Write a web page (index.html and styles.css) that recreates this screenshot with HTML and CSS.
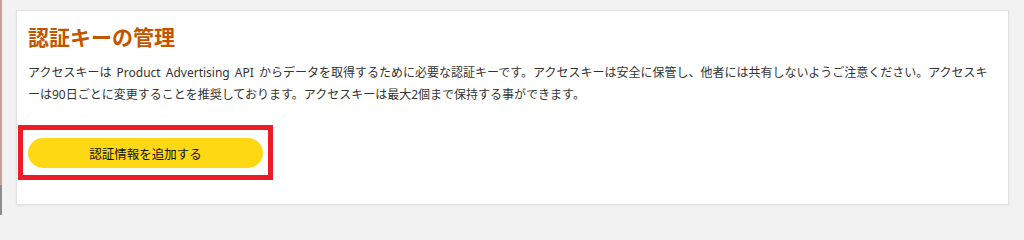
FILE: index.html
```html
<!DOCTYPE html>
<html lang="ja">
<head>
<meta charset="utf-8">
<title>認証キーの管理</title>
<link rel="stylesheet" href="styles.css">
</head>
<body>
<div class="edge"></div>
<main class="main">
  <section class="card">
    <h1 class="title">認証キーの管理</h1>
    <p class="desc">アクセスキーは Product Advertising API からデータを取得するために必要な認証キーです。アクセスキーは安全に保管し、他者には共有しないようご注意ください。アクセスキーは90日ごとに変更することを推奨しております。アクセスキーは最大2個まで保持する事ができます。</p>
    <div class="highlight">
      <button class="add-btn" type="button">認証情報を追加する</button>
    </div>
  </section>
</main>
</body>
</html>
```
FILE: styles.css
```css
html, body {
  margin: 0;
  padding: 0;
}
body {
  background: #f2f2f2;
  height: 215px;
  display: flex;
  overflow: hidden;
  font-family: "Noto Sans", "Noto Sans CJK JP", sans-serif;
}
.edge {
  width: 2px;
  flex: none;
  background: linear-gradient(#c9a192 0, #c9a192 86%, #8d8d8d 86%, #8d8d8d 100%);
}
.main {
  flex: 1;
  padding: 10px 0 0 14px;
}
.card {
  width: 993px;
  box-sizing: border-box;
  background: #fff;
  border: 1px solid #e2e2e2;
  box-shadow: 0 1px 2px rgba(0, 0, 0, 0.06);
  padding: 12px 18px 24px 11px;
}
.title {
  margin: 0 0 11px;
  font-size: 21px;
  line-height: 28px;
  font-weight: 700;
  color: #c45500;
}
.desc {
  margin: 0;
  font-size: 12px;
  line-height: 22px;
  word-spacing: 2px;
  color: #333;
}
.highlight {
  display: inline-block;
  margin: 19px 0 0 -10px;
  border: 5px solid #ec1c24;
  padding: 8px 5px 7px;
}
.add-btn {
  display: block;
  width: 235px;
  height: 30px;
  border: none;
  border-radius: 15px;
  background: #ffd814;
  color: #0f1111;
  font-family: "Noto Sans", "Noto Sans CJK JP", sans-serif;
  font-size: 12.5px;
  padding: 0;
  cursor: pointer;
}
```
